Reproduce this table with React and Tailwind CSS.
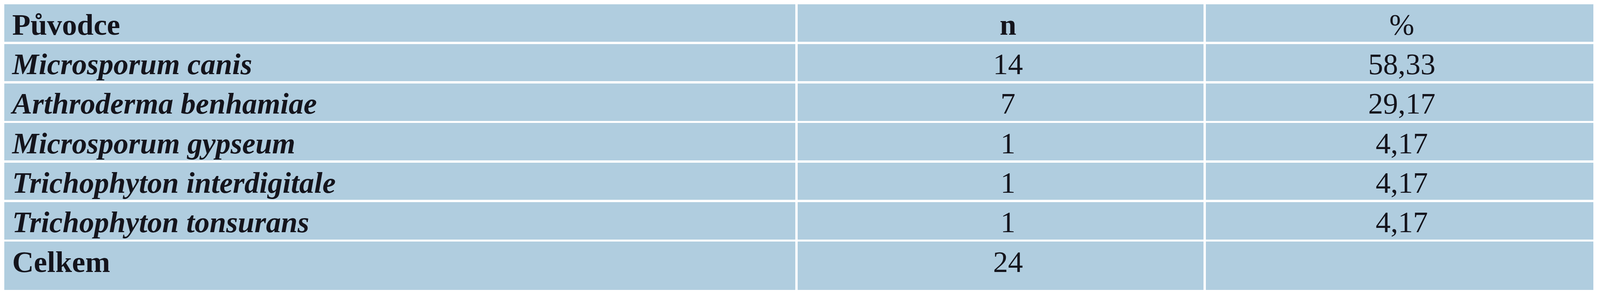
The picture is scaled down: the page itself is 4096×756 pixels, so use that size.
const rows = [
  { name: "Microsporum canis", n: "14", pct: "58,33" },
  { name: "Arthroderma benhamiae", n: "7", pct: "29,17" },
  { name: "Microsporum gypseum", n: "1", pct: "4,17" },
  { name: "Trichophyton interdigitale", n: "1", pct: "4,17" },
  { name: "Trichophyton tonsurans", n: "1", pct: "4,17" },
];

const cell = "bg-[#b0cddf] text-[#14141c] text-[76.5px] leading-none pt-[14.3px] whitespace-nowrap";

export default function App() {
  return (
    <div className="w-[4096px] h-[756px] bg-white font-['Liberation_Serif',serif] p-[11.34px]">
      <div className="grid grid-cols-[2025px_1039px_992px] gap-[5.67px]">
        <div className={`${cell} h-[95.7px] pl-[20px] font-bold`}>Původce</div>
        <div className={`${cell} h-[95.7px] text-center pl-[38px] font-bold`}>n</div>
        <div className={`${cell} h-[95.7px] text-center pl-[12px]`}>%</div>

        {rows.map((r) => (
          <div key={r.name} className="contents">
            <div className={`${cell} h-[95.7px] pl-[20px] font-bold italic`}>{r.name}</div>
            <div className={`${cell} h-[95.7px] text-center pl-[38px]`}>{r.n}</div>
            <div className={`${cell} h-[95.7px] text-center pl-[12px]`}>{r.pct}</div>
          </div>
        ))}

        <div className={`${cell} h-[123.8px] pl-[20px] font-bold`}>Celkem</div>
        <div className={`${cell} h-[123.8px] text-center pl-[38px]`}>24</div>
        <div className={`${cell} h-[123.8px]`}></div>
      </div>
    </div>
  );
}
